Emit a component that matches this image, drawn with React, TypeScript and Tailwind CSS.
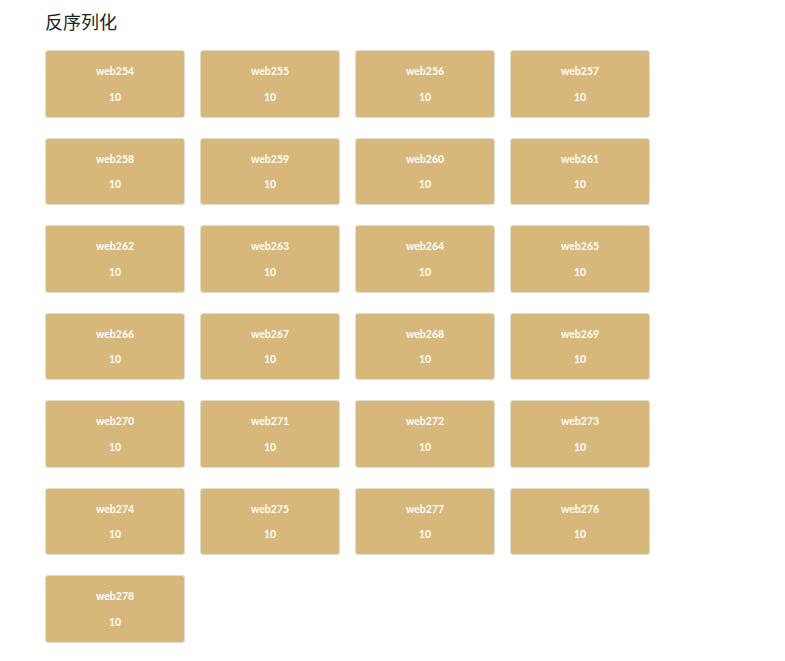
const ITEMS = [
  'web254', 'web255', 'web256', 'web257',
  'web258', 'web259', 'web260', 'web261',
  'web262', 'web263', 'web264', 'web265',
  'web266', 'web267', 'web268', 'web269',
  'web270', 'web271', 'web272', 'web273',
  'web274', 'web275', 'web277', 'web276',
  'web278',
]

export default function App() {
  return (
    <div className="min-h-[661px] bg-white pl-[45px] pt-[9px] font-['Noto_Sans_CJK_SC',sans-serif]">
      <h1 className="text-[18px] leading-[24px] text-[#222] font-normal">反序列化</h1>
      <div className="mt-[17px] grid grid-cols-[repeat(4,140px)] gap-x-[15px] gap-y-[20px]">
        {ITEMS.map((name) => (
          <div
            key={name}
            className="h-[67.5px] rounded-[3px] border border-[#e2ddd2] bg-[#d7b77a] flex flex-col items-center pt-[14px] font-['Lato',sans-serif] font-bold text-[10.5px] leading-[12px] text-white"
          >
            <span>{name}</span>
            <span className="mt-[13.5px]">10</span>
          </div>
        ))}
      </div>
    </div>
  )
}
